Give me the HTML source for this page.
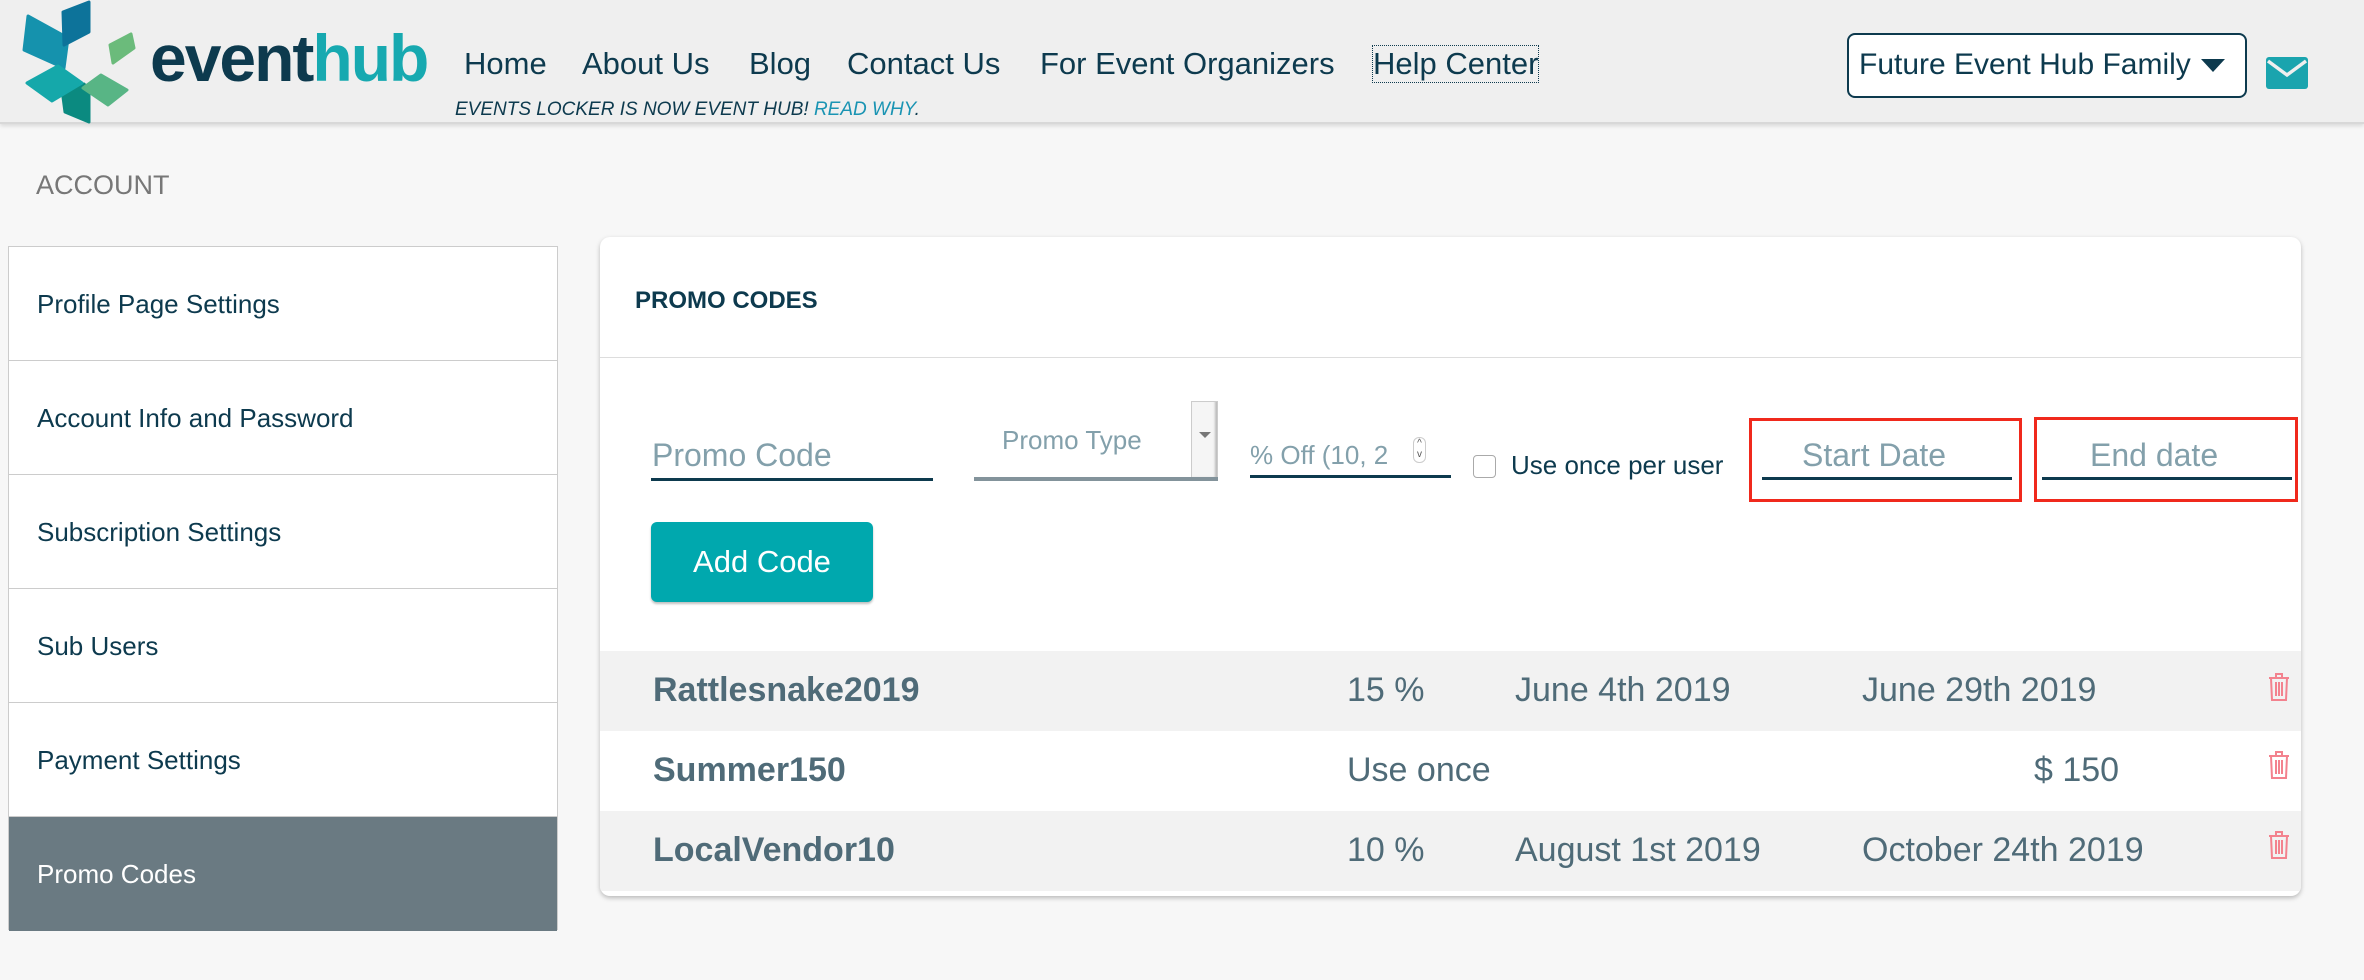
<!DOCTYPE html>
<html><head><meta charset="utf-8"><style>
*{margin:0;padding:0;box-sizing:border-box}
body{width:2364px;height:980px;background:#f7f7f7;font-family:"Liberation Sans",sans-serif;position:relative;overflow:hidden}
.a{position:absolute;white-space:nowrap}
.hdr{position:absolute;left:0;top:0;width:2364px;height:124px;background:#efefef;border-bottom:2px solid #d8d8d8;box-shadow:0 2px 4px rgba(0,0,0,.12)}
.nav{font-size:31px;color:#0d3a4e;top:46px}
.side{position:absolute;left:8px;top:246px;width:550px;height:684px;background:#fff;border:1px solid #ccc}
.si{position:absolute;left:0;width:548px;height:114px;border-bottom:1px solid #ccc;font-size:26px;color:#0d3a4e;padding-left:28px;line-height:114px}
.card{position:absolute;left:600px;top:237px;width:1701px;height:659px;background:#fff;border-radius:10px;box-shadow:0 2px 5px rgba(0,0,0,.25);overflow:hidden}
.ul{position:absolute;height:3px;background:#0d3a4e}
.ph{color:#83a0ab}
.row{position:absolute;left:0;width:1701px;height:80px;font-size:34px;color:#4f6b78}
.row span{position:absolute;top:20px}
.red{position:absolute;border:3px solid #f0291c}
</style></head><body>
<div class="hdr">
<svg class="a" style="left:0;top:0" width="140" height="124" viewBox="0 0 140 124" stroke-linejoin="round">
<polygon points="28,16 68,38 64,68 24,50" fill="#1592ad" stroke="#1592ad" stroke-width="3"/>
<polygon points="63,12 89,2 89,32 64,45" fill="#0d739a" stroke="#0d739a" stroke-width="3"/>
<polygon points="110,45 131,34 134,48 113,63" fill="#6bbb7b" stroke="#6bbb7b" stroke-width="3"/>
<polygon points="63,97 84,84 89,90 89,122 65,112" fill="#0b8a80" stroke="#0b8a80" stroke-width="3"/>
<polygon points="27,83 58,66 82,83 52,101" fill="#15a8aa" stroke="#15a8aa" stroke-width="3"/>
<polygon points="83,88 101,75 127,90 108,105" fill="#58b585" stroke="#58b585" stroke-width="3"/>
</svg>
<div class="a" style="left:150px;top:20px;font-size:66px;font-weight:bold;letter-spacing:-2px;color:#0d3a4e">event<span style="color:#17a9b0">hub</span></div>
<div class="a nav" style="left:464px">Home</div>
<div class="a nav" style="left:582px">About Us</div>
<div class="a nav" style="left:749px">Blog</div>
<div class="a nav" style="left:847px">Contact Us</div>
<div class="a nav" style="left:1040px">For Event Organizers</div>
<div class="a nav" style="left:1373px;outline:1px dotted #0d3a4e">Help Center</div>
<div class="a" style="left:455px;top:99px;font-size:19px;font-style:italic;color:#0d3a4e">EVENTS LOCKER IS NOW EVENT HUB! <span style="color:#1a94b3">READ WHY</span>.</div>
<div class="a" style="left:1847px;top:33px;width:400px;height:65px;border:2px solid #0d3a4e;border-radius:8px;background:#fff;font-size:30px;color:#0d3a4e;padding:13px 0 0 10px">Future Event Hub Family <span style="position:absolute;right:20px;top:24px;border-left:12px solid transparent;border-right:12px solid transparent;border-top:13px solid #0d3a4e"></span></div>
<svg class="a" style="left:2266px;top:57px" width="42" height="32" viewBox="0 0 42 32"><rect width="42" height="32" rx="3" fill="#1aa4ae"/><path d="M2 4 L21 18 L40 4" stroke="#efefef" stroke-width="3.5" fill="none"/></svg>
</div>
<div class="a" style="left:36px;top:170px;font-size:27px;color:#777">ACCOUNT</div>
<div class="side">
<div class="si" style="top:0">Profile Page Settings</div>
<div class="si" style="top:114px">Account Info and Password</div>
<div class="si" style="top:228px">Subscription Settings</div>
<div class="si" style="top:342px">Sub Users</div>
<div class="si" style="top:456px">Payment Settings</div>
<div class="si" style="top:570px;background:#6a7a82;color:#fff;border:0">Promo Codes</div>
</div>
<div class="card">
<div class="a" style="left:35px;top:50px;font-size:24px;font-weight:bold;color:#0d3a4e">PROMO CODES</div>
<div class="a" style="left:0;top:120px;width:1701px;height:1px;background:#ddd"></div>
<div class="a ph" style="left:52px;top:200px;font-size:32px">Promo Code</div>
<div class="ul" style="left:51px;top:241px;width:282px"></div>
<div class="a ph" style="left:402px;top:188px;font-size:26px">Promo Type</div>
<div class="a" style="left:591px;top:164px;width:27px;height:80px;background:#f5f5f5;border:1px solid #ccc;box-shadow:inset -2px -2px 2px #bbb"><span style="position:absolute;left:7px;top:30px;border-left:6px solid transparent;border-right:6px solid transparent;border-top:6px solid #777"></span></div>
<div class="a" style="left:374px;top:240px;width:244px;height:4px;background:#83939b"></div>
<div class="a ph" style="left:650px;top:203px;font-size:26px">% Off (10, 2</div>
<div class="a" style="left:813px;top:200px;width:13px;height:26px;border:1px solid #ccc;border-radius:6px;font-size:10px;line-height:11px;text-align:center;color:#555">^<br>v</div>
<div class="ul" style="left:650px;top:238px;width:201px"></div>
<div class="a" style="left:873px;top:218px;width:23px;height:23px;border:1px solid #aaa;border-radius:4px;background:#fff"></div>
<div class="a" style="left:911px;top:213px;font-size:26px;color:#0d3a4e">Use once per user</div>
<div class="red" style="left:1149px;top:181px;width:273px;height:84px"></div>
<div class="a ph" style="left:1202px;top:200px;font-size:32px">Start Date</div>
<div class="ul" style="left:1162px;top:240px;width:250px"></div>
<div class="red" style="left:1434px;top:180px;width:264px;height:85px"></div>
<div class="a ph" style="left:1490px;top:200px;font-size:32px">End date</div>
<div class="ul" style="left:1442px;top:240px;width:250px"></div>
<div class="a" style="top:285px;left:51px;width:222px;height:80px;background:#00a8ae;border-radius:6px;box-shadow:0 2px 2px rgba(0,0,0,.25);color:#fff;font-size:31px;line-height:80px;text-align:center">Add Code</div>
<div class="row" style="top:414px;background:#f2f2f2"><span style="left:53px;font-weight:bold">Rattlesnake2019</span><span style="left:747px">15 %</span><span style="left:915px">June 4th 2019</span><span style="left:1262px">June 29th 2019</span></div>
<div class="row" style="top:494px;background:#fff"><span style="left:53px;font-weight:bold">Summer150</span><span style="left:747px">Use once</span><span style="left:1434px">$ 150</span></div>
<div class="row" style="top:574px;background:#f2f2f2"><span style="left:53px;font-weight:bold">LocalVendor10</span><span style="left:747px">10 %</span><span style="left:915px">August 1st 2019</span><span style="left:1262px">October 24th 2019</span></div>
<svg class="a" style="left:1667px;top:435px" width="24" height="30" viewBox="0 0 24 30"><g stroke="#f3828e" stroke-width="2" fill="none"><path d="M2 6H22M9 6V2H15V6M4 6L5 28H19L20 6M9 10V24M12 10V24M15 10V24"/></g></svg>
<svg class="a" style="left:1667px;top:513px" width="24" height="30" viewBox="0 0 24 30"><g stroke="#f3828e" stroke-width="2" fill="none"><path d="M2 6H22M9 6V2H15V6M4 6L5 28H19L20 6M9 10V24M12 10V24M15 10V24"/></g></svg>
<svg class="a" style="left:1667px;top:593px" width="24" height="30" viewBox="0 0 24 30"><g stroke="#f3828e" stroke-width="2" fill="none"><path d="M2 6H22M9 6V2H15V6M4 6L5 28H19L20 6M9 10V24M12 10V24M15 10V24"/></g></svg>
</div>
</body></html>
